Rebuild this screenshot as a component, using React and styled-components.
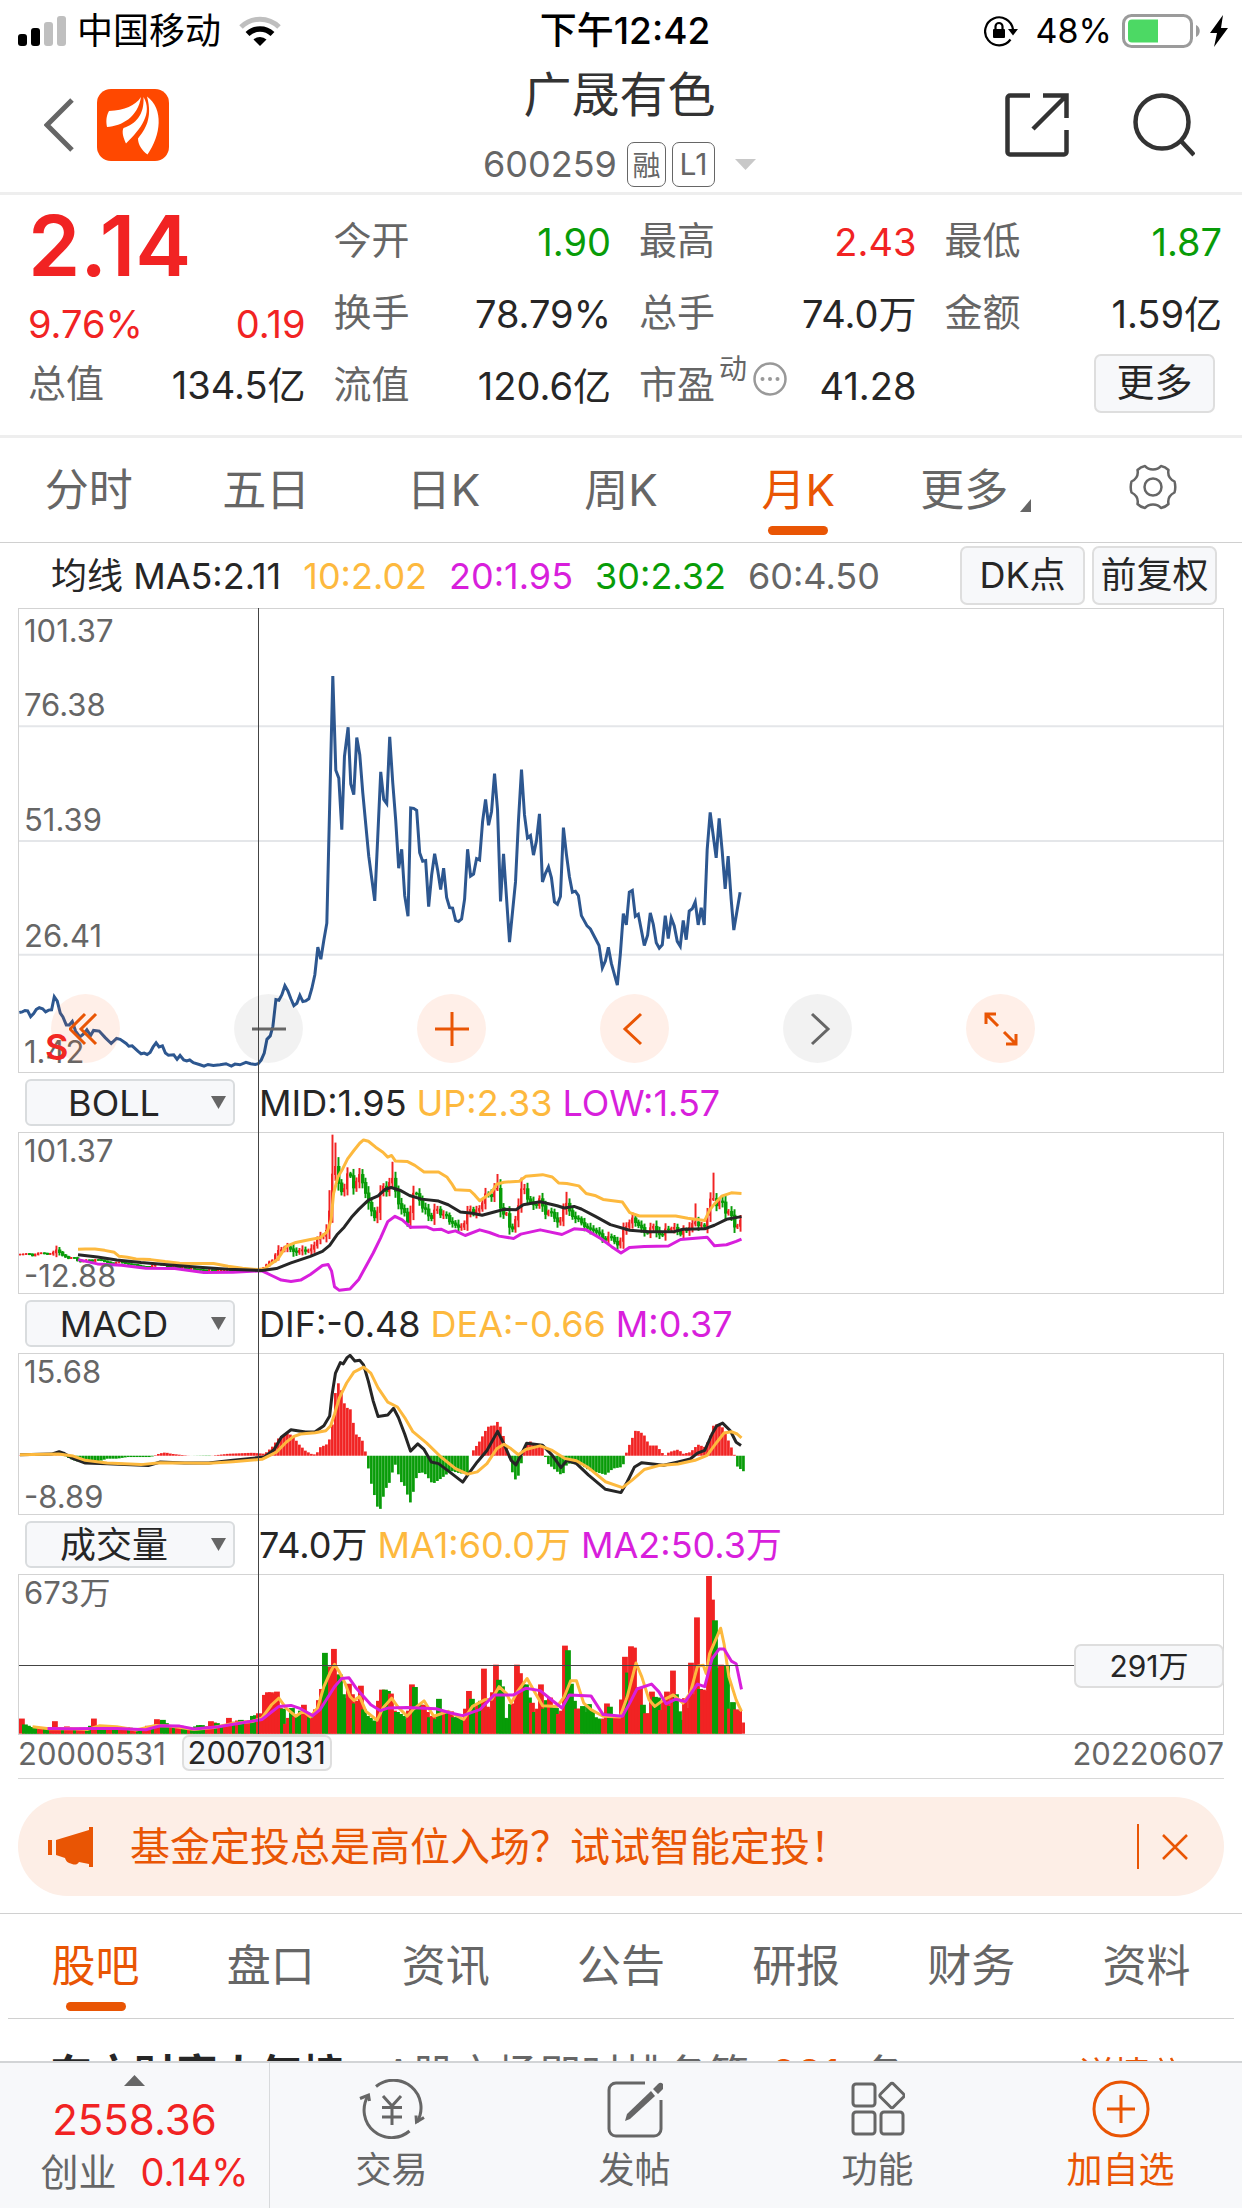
import React, { useState } from 'react';
import styled, { createGlobalStyle } from 'styled-components';

const ORANGE = '#e95504';
const RED = '#f12323';
const GREEN = '#089c08';
const YELLOW = '#fdb93e';
const PURPLE = '#d81fdc';
const DARK = '#262626';
const GREY = '#666666';

const GlobalStyle = createGlobalStyle`
  * {
    box-sizing: border-box;
  }

  body {
    margin: 0;
    background: #ffffff;
    color: ${DARK};
    font-family: Inter, "Noto Sans CJK SC", sans-serif;
    font-weight: 400;
  }

  button, select {
    margin: 0;
    padding: 0;
    border: none;
    background: none;
    color: inherit;
    font: inherit;
    cursor: pointer;
  }

  a {
    color: inherit;
    text-decoration: none;
  }

  svg {
    display: block;
  }
`;

const Page = styled.div`
  display: flex;
  flex-direction: column;
  height: 100vh;
  overflow: hidden;
`;

const Content = styled.main`
  flex: 1;
  min-height: 0;
  overflow: hidden;
`;

/* status bar */

const StatusBar = styled.div`
  display: grid;
  grid-template-columns: 1fr auto 1fr;
  align-items: center;
  height: 62px;
  padding: 0 14px 0 18px;
  color: #000000;
  font-size: 34px;
  line-height: 48px;
`;

const StatusSide = styled.div`
  display: flex;
  align-items: center;
  gap: 10px;
  justify-content: ${({ $end }) => ($end ? 'flex-end' : 'flex-start')};
`;

const Carrier = styled.span`
  margin-right: 8px;
  font-size: 36px;
`;

const Clock = styled.span`
  padding-left: 4px;
  font-size: 37px;
  font-weight: 500;
`;

const Percent = styled.span`
  margin-left: 8px;
`;

/* header */

const Header = styled.header`
  display: grid;
  grid-template-columns: 1fr auto 1fr;
  align-items: center;
  height: 133px;
  padding: 0 47px 0 44px;
  border-bottom: 3px solid #eeeeee;
`;

const HeaderSide = styled.div`
  display: flex;
  align-items: center;
  gap: ${({ $end }) => ($end ? '64px' : '22px')};
  justify-content: ${({ $end }) => ($end ? 'flex-end' : 'flex-start')};
  padding-bottom: 4px;
`;

const TitleBlock = styled.div`
  display: flex;
  flex-direction: column;
  align-items: center;
`;

const StockName = styled.h1`
  margin: 0;
  color: #333333;
  font-size: 48px;
  font-weight: 400;
  line-height: 66px;
`;

const StockCode = styled.button`
  display: flex;
  align-items: center;
  gap: 6px;
  height: 64px;
  padding-top: 8px;
  color: ${GREY};
  font-size: 36px;
`;

const Digits = styled.span`
  margin-right: 4px;
`;

const Tag = styled.span`
  display: flex;
  align-items: center;
  justify-content: center;
  width: ${({ $width }) => $width}px;
  height: 45px;
  border: 1px solid ${GREY};
  border-radius: 7px;
  font-size: ${({ $size }) => $size || 28}px;
`;

const TagArrow = styled.svg`
  margin-left: 14px;
`;

/* quote */

const Quote = styled.section`
  display: grid;
  grid-template-columns: repeat(4, 1fr);
  column-gap: 28px;
  padding: 11px 20px 13px 28px;
  border-bottom: 3px solid #eeeeee;
  font-size: 38px;
  line-height: 46px;
`;

const QuoteRow = styled.div`
  display: flex;
  align-items: center;
  justify-content: space-between;
  height: ${({ $height }) => $height || 72}px;
  color: ${({ $color }) => $color || DARK};
  white-space: nowrap;
`;

const Price = styled.div`
  height: 80px;
  color: ${RED};
  font-size: 84px;
  font-weight: 600;
  line-height: 80px;
`;

const QuoteLabel = styled.span`
  display: flex;
  align-items: center;
  padding-bottom: 4px;
  color: ${GREY};
`;

const Sup = styled.span`
  align-self: flex-start;
  margin: 0 6px 0 4px;
  font-size: 28px;
  line-height: 16px;
`;

const Info = styled.span`
  padding-bottom: 10px;
`;

const QuoteValue = styled.span`
  color: ${({ $color }) => $color || 'inherit'};
`;

const BoxButton = styled.button`
  display: flex;
  align-items: center;
  justify-content: center;
  width: ${({ $width }) => $width}px;
  height: 59px;
  padding-bottom: 2px;
  border: 2px solid #dedede;
  border-radius: 7px;
  background: #f7f8fa;
  color: ${DARK};
  font-size: ${({ $size }) => $size || 36}px;
  white-space: nowrap;
`;

const MoreButton = styled(BoxButton)`
  margin: 0 7px 6px auto;
`;

/* tabs */

const Tabs = styled.nav`
  display: flex;
  height: 105px;
  margin: 0 ${({ $inset }) => $inset || 0}px;
  border-bottom: 1px solid #d0d0d0;
`;

const Tab = styled.button`
  position: relative;
  flex: 1;
  display: flex;
  align-items: center;
  justify-content: center;
  gap: 12px;
  padding-bottom: 6px;
  color: ${({ $active }) => ($active ? ORANGE : GREY)};
  font-size: 44px;

  &::after {
    content: '';
    position: absolute;
    bottom: 7px;
    left: 50%;
    width: 60px;
    height: 9px;
    margin-left: -30px;
    border-radius: 5px;
    background: ${({ $active }) => ($active ? ORANGE : 'transparent')};
  }
`;

const Corner = styled.svg`
  align-self: flex-end;
  margin-bottom: 24px;
`;

/* charts */

const MaRow = styled.div`
  display: flex;
  align-items: center;
  gap: 22px;
  height: 65px;
  padding: 0 25px 0 51px;
  font-size: 36px;
  line-height: 44px;
  white-space: nowrap;
`;

const MaButtons = styled.div`
  display: flex;
  gap: 7px;
  margin-left: auto;
`;

const Value = styled.span`
  color: ${({ $color }) => $color};
`;

const ChartArea = styled.section`
  position: relative;
  margin: 0 18px;
  border-bottom: 1px solid #d8d8d8;
`;

const Frame = styled.div`
  position: relative;
  height: ${({ $height }) => $height}px;
  border: 1px solid #d3d3d3;
`;

const Plot = styled.svg`
  width: 100%;
  height: 100%;

  path, line {
    vector-effect: non-scaling-stroke;
  }
`;

const AxisLabel = styled.span`
  position: absolute;
  top: ${({ $top }) => $top}px;
  left: 5px;
  color: ${GREY};
  font-size: 31px;
  line-height: 36px;
`;

const SellMark = styled.span`
  position: absolute;
  left: 26px;
  bottom: 3px;
  color: ${RED};
  font-size: 36px;
  font-weight: 600;
  line-height: 44px;
`;

const ChartControls = styled.div`
  position: absolute;
  left: 32px;
  bottom: 9px;
  display: flex;
  gap: 114px;
`;

const RoundButton = styled.button`
  display: flex;
  align-items: center;
  justify-content: center;
  width: 69px;
  height: 69px;
  border-radius: 50%;
  background: ${({ $grey }) => ($grey ? 'rgba(0, 0, 0, 0.05)' : 'rgba(255, 100, 30, 0.1)')};
  color: ${({ $grey }) => ($grey ? GREY : ORANGE)};
`;

const IndicatorRow = styled.div`
  display: flex;
  align-items: center;
  gap: 10px;
  height: 59px;
  padding-left: 7px;
  font-size: 36px;
  line-height: 44px;
  white-space: nowrap;
`;

const SelectBox = styled.div`
  position: relative;
  width: 210px;
  margin-right: 14px;
`;

const Select = styled.select`
  appearance: none;
  width: 100%;
  height: 47px;
  padding: 0 32px 0 0;
  border: 2px solid #d9dcde;
  border-radius: 6px;
  background: #f7f8fa;
  text-align: center;
  text-align-last: center;
`;

const SelectArrow = styled.svg`
  position: absolute;
  top: 17px;
  right: 9px;
  pointer-events: none;
`;

const CrossVertical = styled.div`
  position: absolute;
  top: 0;
  bottom: 44px;
  left: 240px;
  width: 1px;
  background: #444444;
`;

const CrossHorizontal = styled.div`
  position: absolute;
  top: 90px;
  left: 0;
  right: 0;
  height: 1px;
  background: #444444;
`;

const CrossValue = styled.span`
  position: absolute;
  top: 69px;
  right: -1px;
  width: 150px;
  height: 44px;
  border: 2px solid #dedede;
  border-radius: 7px;
  background: #f7f8fa;
  font-size: 30px;
  line-height: 40px;
  text-align: center;
`;

const DateRow = styled.div`
  display: flex;
  align-items: flex-start;
  height: 43px;
  color: ${GREY};
  font-size: 31px;
  line-height: 38px;
`;

const CursorDate = styled.span`
  width: 150px;
  height: 36px;
  margin: 0 auto 0 16px;
  border: 2px solid #dedede;
  border-radius: 7px;
  background: #f7f8fa;
  color: ${DARK};
  line-height: 32px;
  text-align: center;
`;

/* banner and feed */

const Banner = styled.aside`
  display: flex;
  align-items: center;
  height: 99px;
  margin: 18px 18px 17px;
  padding: 0 36px 0 30px;
  border-radius: 50px;
  background: #fdeee6;
  color: ${ORANGE};
  font-size: 40px;
`;

const BannerLink = styled.a`
  flex: 1;
  margin-left: 36px;
  padding-bottom: 6px;
  white-space: nowrap;
`;

const BannerClose = styled.button`
  height: 45px;
  padding-left: 23px;
  border-left: 2px solid ${ORANGE};
`;

const Feed = styled.section`
  border-top: 1px solid #d0d0d0;
`;

const RankRow = styled.a`
  display: flex;
  align-items: center;
  height: 60px;
  margin-top: 26px;
  padding: 0 60px 0 50px;
  color: ${GREY};
  font-size: 42px;
  line-height: 60px;
  white-space: nowrap;
`;

const RankTitle = styled.strong`
  margin-right: 40px;
  color: ${DARK};
  font-weight: 700;
`;

const RankNumber = styled.span`
  margin: 0 22px;
  color: ${ORANGE};
`;

const RankMore = styled.span`
  display: flex;
  align-items: center;
  gap: 8px;
  margin-left: auto;
  color: ${ORANGE};
  font-size: 36px;
`;

/* footer */

const Footer = styled.footer`
  display: flex;
  flex: none;
  height: 147px;
  border-top: 2px solid #d2d4d6;
  background: #f7f8fa;
  color: ${GREY};
`;

const IndexCell = styled.button`
  display: flex;
  flex-direction: column;
  align-items: center;
  width: 270px;
  padding-top: 12px;
  border-right: 1px solid #d8dadc;
`;

const IndexValue = styled.span`
  margin-top: 8px;
  color: ${RED};
  font-size: 42px;
  line-height: 52px;
`;

const IndexLine = styled.span`
  display: flex;
  align-items: center;
  gap: 24px;
  padding-left: 20px;
  font-size: 38px;
  line-height: 52px;
`;

const IndexChange = styled.span`
  color: ${RED};
`;

const FooterItem = styled.button`
  flex: 1;
  display: flex;
  flex-direction: column;
  align-items: center;
  padding-top: 16px;
  color: ${({ $active }) => ($active ? ORANGE : 'inherit')};
  font-size: 36px;
  line-height: 62px;
`;

/* chart data, in the plot's own units */

const CLOSE = [
  57,1200, 66,1198, 74,1194, 82,1195, 91,1212, 100,1203, 108,1191, 117,1186, 127,1189, 136,1198, 145,1193, 154,1192,
  162,1154, 171,1167, 180,1202, 188,1213, 198,1236, 207,1236, 216,1226, 226,1254, 239,1271, 250,1262, 260,1250,
  271,1267, 280,1252, 297,1254, 315,1273, 333,1290, 349,1275, 360,1278, 378,1290, 386,1298, 396,1297, 414,1313,
  423,1320, 432,1318, 441,1322, 450,1316, 459,1300, 468,1288, 477,1300, 487,1297, 496,1318, 505,1324, 521,1323,
  531,1336, 540,1325, 551,1338, 560,1341, 569,1338, 580,1346, 600,1352, 612,1356, 624,1351, 640,1354, 660,1352,
  678,1349, 694,1356, 705,1350, 720,1352, 738,1345, 752,1349, 766,1351, 775,1349, 784,1338, 793,1318, 801,1278,
  811,1268, 819,1240, 828,1162, 837,1164, 846,1148, 855,1122, 864,1137, 873,1160, 882,1180, 891,1173, 900,1150,
  909,1168, 918,1166, 927,1160, 936,1130, 945,1090, 954,1010, 963,1045, 972,990, 981,940, 987,700, 999,221,
  1008,495, 1017,518, 1026,668, 1034,455, 1045,370, 1053,535, 1062,566, 1071,400, 1080,450, 1089,560, 1107,745,
  1116,810, 1125,875, 1134,690, 1143,500, 1152,580, 1161,592, 1170,398, 1179,530, 1188,640, 1197,780, 1206,725,
  1215,860, 1225,920, 1233,605, 1242,606, 1251,612, 1260,735, 1269,760, 1278,758, 1287,892, 1296,800, 1305,738,
  1314,785, 1323,842, 1332,780, 1341,865, 1350,895, 1359,896, 1368,932, 1377,935, 1386,928, 1395,870, 1404,725,
  1413,803, 1422,797, 1431,752, 1440,756, 1449,645, 1458,580, 1467,655, 1476,615, 1485,505, 1494,610, 1503,877,
  1512,738, 1530,995, 1548,820, 1557,640, 1566,493, 1575,625, 1584,692, 1593,685, 1602,742, 1611,700, 1620,622,
  1629,820, 1638,795, 1647,776, 1656,808, 1665,878, 1674,885, 1683,862, 1692,662, 1701,740, 1710,805, 1719,850,
  1728,847, 1737,860, 1746,918, 1763,948, 1773,957, 1799,1005, 1809,1070, 1818,1050, 1827,1010, 1836,1057,
  1854,1120, 1863,1030, 1872,912, 1881,945, 1890,850, 1899,845, 1908,920, 1917,914, 1935,1005, 1945,975, 1953,910,
  1962,943, 1971,997, 1980,1013, 1989,1003, 1998,918, 2007,985, 2016,925, 2025,948, 2034,993, 2043,1007, 2052,932,
  2061,988, 2070,905, 2079,898, 2088,878, 2097,945, 2106,895, 2115,945, 2124,725, 2133,618, 2151,750, 2160,635,
  2169,730, 2178,840, 2187,745, 2196,870, 2204,960, 2223,850,
];

const BOLL_UP = [
  160,509, 175,508, 195,508, 215,512, 235,518, 245,530, 262,533, 280,538, 310,540, 340,546, 370,551, 400,552,
  440,552, 470,560, 500,566, 530,570, 545,568, 560,552, 572,540, 590,500, 610,488, 640,479, 660,474, 675,455,
  683,420, 688,340, 697,290, 707,265, 717,235, 730,210, 742,188, 750,178, 760,182, 775,200, 790,215, 800,230,
  808,225, 816,242, 840,243, 856,255, 875,275, 905,275, 922,290, 932,310, 940,329, 970,331, 980,345, 990,362,
  1000,352, 1015,335, 1025,312, 1040,306, 1072,303, 1085,288, 1120,283, 1140,290, 1153,308, 1170,310, 1195,317,
  1210,340, 1230,347, 1245,358, 1285,366, 1300,398, 1320,408, 1395,408, 1420,415, 1455,422, 1465,390, 1475,372,
  1490,348, 1510,338, 1531,340,
];

const BOLL_MID = [
  160,525, 200,532, 240,541, 290,549, 350,556, 410,563, 470,569, 540,573, 570,567, 600,550, 640,530, 665,515,
  680,497, 695,465, 710,442, 725,412, 740,388, 760,360, 780,347, 795,327, 807,322, 825,330, 845,346, 870,357,
  905,363, 925,374, 950,396, 975,400, 995,406, 1020,396, 1040,388, 1065,389, 1080,374, 1115,365, 1150,377,
  1165,384, 1185,379, 1200,387, 1230,410, 1260,434, 1300,451, 1340,456, 1390,456, 1410,448, 1455,447, 1475,436,
  1500,418, 1531,410,
];

const BOLL_LOW = [
  160,540, 200,553, 250,557, 300,566, 360,567, 420,579, 480,578, 540,574, 560,588, 580,602, 600,606, 620,602,
  640,585, 665,558, 677,555, 684,575, 690,622, 700,633, 722,629, 740,600, 755,560, 770,520, 785,475, 800,425,
  815,409, 830,420, 847,442, 880,441, 895,450, 910,448, 925,458, 940,453, 960,467, 990,450, 1010,458, 1030,469,
  1060,476, 1075,463, 1115,450, 1160,464, 1185,447, 1210,450, 1240,476, 1262,500, 1282,520, 1300,503, 1330,500,
  1380,499, 1405,479, 1460,472, 1475,498, 1500,495, 1520,485, 1531,478,
];

const DIF = [
  40,463, 105,461, 121,454, 130,458, 150,475, 175,488, 220,490, 305,496, 330,485, 380,488, 430,488, 480,480,
  545,470, 565,448, 580,410, 600,387, 630,394, 650,393, 668,375, 680,345, 685,280, 692,215, 702,183, 708,187,
  716,168, 722,161, 732,178, 742,176, 750,190, 760,240, 770,300, 780,347, 800,342, 812,322, 822,350, 835,400,
  847,452, 862,430, 875,447, 890,485, 905,490, 925,512, 955,546, 965,525, 985,485, 1005,450, 1027,392, 1040,430,
  1055,480, 1065,494, 1075,465, 1087,428, 1120,434, 1140,465, 1158,502, 1170,480, 1190,490, 1215,525, 1250,568,
  1282,578, 1295,545, 1310,500, 1325,487, 1370,495, 1400,485, 1425,476, 1440,458, 1455,450, 1470,400, 1480,375,
  1492,367, 1508,390, 1520,425, 1530,435,
];

const DEA = [
  40,463, 120,461, 150,467, 175,480, 220,488, 290,493, 330,487, 430,489, 480,484, 540,477, 570,455, 590,425,
  605,408, 620,400, 650,396, 672,390, 682,375, 690,340, 700,290, 715,245, 730,212, 750,197, 765,215, 780,260,
  800,303, 820,318, 835,350, 852,393, 880,427, 910,470, 940,505, 965,522, 985,515, 1005,490, 1025,445, 1040,431,
  1055,445, 1070,463, 1085,447, 1115,436, 1140,450, 1165,474, 1190,481, 1215,503, 1250,545, 1285,563, 1305,540,
  1330,508, 1360,496, 1400,491, 1435,480, 1460,465, 1480,425, 1495,397, 1510,393, 1522,400, 1531,412,
];

const MACD = [
  40,465, 130,465, 142,475, 155,482, 175,489, 200,484, 220,475, 240,475, 262,470, 310,470, 318,465, 328,459,
  340,456, 352,460, 375,464, 390,466, 430,467, 440,465, 470,460, 520,457, 545,460, 560,440, 575,410, 592,398,
  603,405, 615,430, 630,452, 645,463, 652,460, 660,440, 675,430, 683,400, 688,320, 693,246, 701,246, 706,290,
  712,318, 722,325, 728,365, 735,405, 745,412, 751,440, 755,466, 760,512, 768,570, 775,600, 780,637, 785,625,
  793,572, 804,545, 810,510, 816,490, 824,540, 835,560, 841,590, 848,615, 856,540, 866,515, 876,520, 892,552,
  910,535, 930,512, 950,520, 966,520, 970,466, 976,450, 990,420, 1005,380, 1010,375, 1022,374, 1027,360,
  1034,385, 1045,440, 1050,466, 1055,510, 1065,545, 1073,510, 1078,466, 1084,440, 1090,418, 1100,430, 1120,435,
  1124,466, 1130,490, 1150,515, 1160,527, 1170,490, 1195,490, 1215,510, 1250,524, 1265,505, 1285,500, 1290,466,
  1298,435, 1312,387, 1328,400, 1340,435, 1355,435, 1368,460, 1375,466, 1380,455, 1400,447, 1410,460, 1425,455,
  1440,432, 1455,440, 1465,410, 1472,375, 1480,370, 1490,378, 1500,400, 1506,437, 1513,445, 1516,466, 1522,500,
  1536,515,
];

// negative: the price fell that month
const VOLUME = [
  46, -28, -24, -20, -20, -18, 16, 20, -14, -14, 18, 38, 20, 20, -20, 22, 16, 14, -12, 12, 18, 16, -14, -24,
  46, 26, -26, -24, -24, 22, 18, -16, -18, 14, 16, 20, -18, 16, 14, -14, -12, 20, 24, 20, -22, 44, 40, -42,
  -32, -24, 20, -20, 22, 24, -20, -20, 16, -16, -22, -26, -26, -22, 22, 38, 34, -32, 22, -22, 26, 48, 36, -36,
  40, -42, -38, 40, 40, -54, -56, 62, 60, 118, 126, 126, 122, 128, 78, -76, 30, 48, -78, 52, -52, -70, 88, 60,
  -50, 48, 74, 102, 136, -246, -204, 204, 258, 180, -180, -120, -108, 152, 120, -92, 100, 146, -74, -54, -48,
  -38, -40, 100, 134, -134, -130, 122, 70, -66, -60, -54, -44, 70, 150, -142, -90, -88, 88, 66, -50, 54, -44,
  -106, -70, 60, -66, 68, -50, -50, -44, -42, 76, 130, -106, -76, 90, -100, 198, 82, 76, 126, 210, -164, -144,
  -48, -46, -90, 92, 210, 184, 150, -150, -110, 94, -66, 76, 150, -76, -102, 110, -80, -78, 60, 70, 268, -254,
  -152, -100, 76, 76, -84, -66, -90, -70, -50, -46, -42, 46, 92, -82, -50, 50, 52, 104, 234, -186, 266, 262,
  140, 142, -88, 62, 62, 128, -112, -110, 72, 100, 128, -84, 192, -120, -68, -42, 108, 78, 216, 120, 354, -136,
  134, 130, 480, 408, -345, -200, 210, 206, -206, 76, -96, 74, 70, 70, 34,
];

const VOL_MA1 = [
  66,592, 100,598, 140,597, 180,600, 205,589, 240,592, 280,602, 320,588, 350,590, 400,600, 440,594, 480,582,
  520,576, 540,565, 560,525, 575,505, 590,535, 610,560, 625,545, 640,562, 655,535, 668,470, 680,430, 690,402,
  700,425, 712,460, 722,500, 730,512, 742,500, 755,545, 778,572, 790,535, 808,505, 820,530, 840,560, 852,540,
  875,513, 895,560, 925,545, 957,570, 975,530, 1000,510, 1015,508, 1030,470, 1045,490, 1055,520, 1068,485,
  1088,445, 1105,490, 1120,528, 1150,530, 1165,500, 1178,452, 1190,452, 1205,520, 1220,540, 1245,560, 1280,562,
  1295,500, 1313,398, 1325,440, 1340,510, 1352,530, 1370,510, 1390,495, 1410,520, 1425,490, 1440,408, 1452,405,
  1458,430, 1465,370, 1488,292, 1495,340, 1505,440, 1520,510, 1531,545,
];

const VOL_MA2 = [
  97,597, 150,598, 190,597, 240,597, 300,601, 330,589, 370,590, 400,599, 450,592, 500,580, 540,570, 575,530,
  600,527, 620,537, 645,558, 660,540, 690,470, 705,445, 720,443, 735,475, 765,525, 785,543, 800,535, 840,533,
  900,537, 930,550, 955,558, 990,540, 1020,495, 1060,495, 1085,475, 1115,482, 1140,512, 1160,535, 1175,495,
  1220,498, 1245,555, 1285,560, 1300,520, 1315,477, 1345,462, 1360,485, 1375,522, 1395,508, 1415,515, 1440,462,
  1455,470, 1470,385, 1485,355, 1495,355, 1510,392, 1520,400, 1531,478,
];

const STEP = 6.2;
const MONTHS = 241;

const toPath = (data) => {
  let d = '';
  for (let i = 0; i < data.length; i += 2) {
    d += `${i ? 'L' : 'M'}${data[i]} ${data[i + 1]}`;
  }
  return d;
};

const valueAt = (data, x) => {
  for (let i = 2; i < data.length; i += 2) {
    if (x <= data[i]) {
      const t = (x - data[i - 2]) / (data[i] - data[i - 2]);
      return data[i - 1] + (data[i + 1] - data[i - 1]) * Math.max(0, t);
    }
  }
  return data[data.length - 1];
};

const HIGHS = { 103: 330, 104: 162, 105: 186, 106: 230, 124: 244, 159: 281, 167: 292, 182: 335, 225: 370, 231: 277 };

const candles = Array.from({ length: MONTHS }, (_, i) => {
  const closeAt = (n) => 160 + (valueAt(CLOSE, 57 + n * 9.01) - 26) * 0.3104;
  const close = closeAt(i);
  const open = closeAt(Math.max(0, i - 1));
  const spread = Math.abs(close - open);
  const wick = 2 + spread * 0.25 + (close < 520 ? 3 + ((i * 7) % 11) : 0);
  return {
    x: 41 + i * STEP,
    up: close <= open,
    top: Math.min(open, close) - 2,
    height: Math.max(5, spread + 4),
    high: HIGHS[i] || Math.min(open, close) - wick,
    low: Math.max(open, close) + wick,
  };
});

const Line = ({ data, color, width = 3 }) => (
  <path d={toPath(data)} fill="none" stroke={color} strokeWidth={width} strokeLinejoin="round" />
);

const PriceChart = () => (
  <Plot viewBox="56 26 3618 1347" preserveAspectRatio="none" aria-hidden="true">
    {[367, 701, 1032].map((y) => (
      <line key={y} x1="56" x2="3674" y1={y} y2={y} stroke="#e4e6e9" strokeWidth="2" />
    ))}
    <path d={toPath(CLOSE)} fill="none" stroke="#2d5790" strokeWidth="3" />
  </Plot>
);

const BollChart = () => (
  <Plot viewBox="38 157 2488 484" preserveAspectRatio="none" aria-hidden="true">
    {candles.map(({ x, up, top, height, high, low }) => (
      <g key={x} fill={up ? RED : GREEN}>
        <rect x={x - 2} y={high} width="4" height={low - high} />
        <rect x={x - 3} y={top} width={up ? 4 : 7} height={height} />
      </g>
    ))}
    <Line data={BOLL_UP} color={YELLOW} />
    <Line data={BOLL_LOW} color={PURPLE} />
    <Line data={BOLL_MID} color={DARK} />
  </Plot>
);

const MacdChart = () => (
  <Plot viewBox="38 157 2488 486" preserveAspectRatio="none" aria-hidden="true">
    {Array.from({ length: MONTHS + 1 }, (_, i) => {
      const x = 40 + i * STEP;
      const y = valueAt(MACD, x);
      return (
        <rect
          key={i}
          x={x - 2}
          y={Math.min(y, 466)}
          width="5.6"
          height={Math.abs(y - 466)}
          fill={y < 466 ? RED : GREEN}
        />
      );
    })}
    <Line data={DIF} color={DARK} />
    <Line data={DEA} color={YELLOW} />
  </Plot>
);

const VolumeChart = () => (
  <Plot viewBox="38 130 2488 484" preserveAspectRatio="none" aria-hidden="true">
    {VOLUME.map((v, i) => (
      <rect
        key={i}
        x={38 + i * STEP}
        y={613 - Math.abs(v)}
        width={i < MONTHS - 1 ? 12 : 6}
        height={Math.abs(v)}
        fill={v < 0 ? GREEN : RED}
      />
    ))}
    <Line data={VOL_MA1} color={YELLOW} />
    <Line data={VOL_MA2} color={PURPLE} />
  </Plot>
);

/* icons */

const SignalIcon = () => (
  <svg width="49" height="31" viewBox="0 0 49 31">
    <rect x="0" y="18" width="9" height="12" rx="3" />
    <rect x="13" y="12" width="9" height="18" rx="3" />
    <rect x="26" y="6" width="9" height="24" rx="3" fill="#bfbfbf" />
    <rect x="39" y="0" width="9" height="30" rx="3" fill="#bfbfbf" />
  </svg>
);

const WifiIcon = () => (
  <svg width="42" height="30" viewBox="0 0 42 30" fill="none">
    <path d="M2 11a27 27 0 0 1 38 0" stroke="#bfbfbf" strokeWidth="5" />
    <path d="M8.500 18a18 18 0 0 1 25 0" stroke="#000" strokeWidth="5.500" />
    <path d="M21 30l-6.500-6.500a9.500 9.500 0 0 1 13 0z" fill="#000" />
  </svg>
);

const RotationLockIcon = () => (
  <svg width="34" height="32" viewBox="0 0 34 32" fill="none" stroke="#000" strokeWidth="2.200">
    <path d="M26.500 24.500a14 14 0 1 1 2.500-10" />
    <path d="M24 14h10l-5 6.500z" fill="#000" stroke="none" />
    <rect x="9" y="14" width="12" height="9" rx="1" fill="#000" stroke="none" />
    <path d="M11.500 15v-3.500a3.500 3.500 0 0 1 7 0V15" />
  </svg>
);

const BatteryIcon = () => (
  <svg width="78" height="34" viewBox="0 0 78 34">
    <rect x="1.500" y="1.500" width="68" height="31" rx="8" fill="none" stroke="#9b9b9b" strokeWidth="3" />
    <path d="M10 5.500h26v23H10a4 4 0 0 1-4-4v-15a4 4 0 0 1 4-4z" fill="#4cd964" />
    <path d="M74 11c5 2 5 10 0 12z" fill="#9b9b9b" />
  </svg>
);

const BoltIcon = () => (
  <svg width="18" height="32" viewBox="0 0 18 32">
    <path d="M13 0L0 18h7L4 32 18 13h-7z" />
  </svg>
);

const BackIcon = () => (
  <svg width="31" height="54" viewBox="0 0 31 54" fill="none" stroke="#666" strokeWidth="5">
    <path d="M28 2L3 27l25 25" />
  </svg>
);

const BrandLogo = () => (
  <svg width="72" height="72" viewBox="0 0 72 72">
    <rect width="72" height="72" rx="14" fill="#ff4800" />
    <g fill="#fff">
      <path d="M44 8C38 17 28 21 12 22c-3 5-3 11-2 16 15-1 31-10 34-30z" />
      <path d="M46.500 8c1 18-8 27-20 31-2 4 0 10 2.500 15.500C44 40 56 24 46.500 8z" />
      <path d="M50 7.500c6 22-2 33-9 42 0 6 4 12 9.500 16C64 46 67 20 50 7.500z" />
    </g>
  </svg>
);

const ShareIcon = () => (
  <svg width="64" height="64" viewBox="0 0 64 64" fill="none" stroke="#333" strokeWidth="4.500">
    <path d="M25 2.500H5a2.500 2.500 0 0 0-2.500 2.500v54A2.500 2.500 0 0 0 5 61.500h54a2.500 2.500 0 0 0 2.500-2.500V37M38 2.500h23.500V25M60 4L28 36" />
  </svg>
);

const SearchIcon = () => (
  <svg width="62" height="64" viewBox="0 0 62 64" fill="none" stroke="#333" strokeWidth="4.500">
    <circle cx="29" cy="29" r="26.500" />
    <path d="M48 48l13 14" />
  </svg>
);

const MoreDotsIcon = () => (
  <svg width="34" height="34" viewBox="0 0 34 34" fill="#999">
    <circle cx="17" cy="17" r="15.500" fill="none" stroke="#999" strokeWidth="2.500" />
    <circle cx="9.500" cy="17" r="2" />
    <circle cx="17" cy="17" r="2" />
    <circle cx="24.500" cy="17" r="2" />
  </svg>
);

const GearIcon = () => (
  <svg width="48" height="46" viewBox="0 0 48 46" fill="none" stroke="#666" strokeWidth="2.500">
    <path
      d="M16 2c2 2.500 5 3.500 8 3.500s6-1 8-3.500c3 .5 5.500 2 7.500 4-1 5 1 9 6 11.500 1 3.500 1 7.500 0 11-5 2.500-7 6.500-6 11.500-2 2-4.500 3.500-7.500 4-2-2.500-5-3.500-8-3.500s-6 1-8 3.500c-3-.5-5.500-2-7.500-4 1-5-1-9-6-11.500-1-3.500-1-7.500 0-11 5-2.500 7-6.500 6-11.500 2-2 4.500-3.500 7.500-4z"
      strokeLinejoin="round"
    />
    <circle cx="24" cy="23" r="8.500" />
  </svg>
);

const HornIcon = () => (
  <svg width="46" height="40" viewBox="0 0 46 40" fill={ORANGE}>
    <rect x="0" y="13" width="4" height="15" />
    <path d="M8 13L41 3V0h4v40h-4v-3l-10-2c-2 3-4 3-7 2s-6-2-7-6l-9-3z" />
  </svg>
);

const CloseIcon = () => (
  <svg width="26" height="26" viewBox="0 0 26 26" fill="none" stroke={ORANGE} strokeWidth="2.500">
    <path d="M1 1l24 24M25 1L1 25" />
  </svg>
);

const ForwardIcon = () => (
  <svg width="24" height="36" viewBox="0 0 24 36" fill="none" stroke={ORANGE} strokeWidth="2.500">
    <path d="M2 1l9 17L2 35M13 1l9 17-9 17" />
  </svg>
);

const TradeIcon = () => (
  <svg width="66" height="60" viewBox="0 0 66 60" fill="none" stroke="currentColor" strokeWidth="3">
    <path d="M17 7.500A27.500 27.500 0 0 1 58 43M50.500 52A27.500 27.500 0 0 1 9 17" />
    <path d="M1 19.500l8.500-3.500 1 6M65 38.500L57.500 43l-.5-6.500" />
    <path d="M24 17l9 10 9-10M33 27v19M23 28.500h20M23 38h20" />
  </svg>
);

const PostIcon = () => (
  <svg width="56" height="60" viewBox="0 0 56 60" fill="none" stroke="currentColor" strokeWidth="3">
    <path d="M38 4H9a7 7 0 0 0-7 7v39a7 7 0 0 0 7 7h38a7 7 0 0 0 7-7V21" />
    <path d="M44 12l4 5-25 23-5 2 2-7z" fill="currentColor" stroke="none" />
    <path d="M46 10l5-5a3.500 3.500 0 0 1 5 5l-5 5z" fill="currentColor" stroke="none" />
  </svg>
);

const ModulesIcon = () => (
  <svg width="54" height="60" viewBox="0 0 54 60" fill="none" stroke="currentColor" strokeWidth="3">
    <rect x="2" y="5" width="22" height="22" rx="3" />
    <rect x="2" y="33" width="22" height="22" rx="3" />
    <rect x="30" y="33" width="22" height="22" rx="3" />
    <path d="M39.500 5a2 2 0 0 1 3 0L52.500 15a2 2 0 0 1 0 3l-10 10a2 2 0 0 1-3 0l-10-10a2 2 0 0 1 0-3z" />
  </svg>
);

const AddIcon = () => (
  <svg width="58" height="60" viewBox="0 0 58 60" fill="none" stroke="currentColor" strokeWidth="3">
    <circle cx="29" cy="30" r="27" />
    <path d="M29 16v28M15 30h28" />
  </svg>
);

const ControlIcon = ({ d }) => (
  <svg width="34" height="34" viewBox="0 0 34 34" fill="none" stroke="currentColor" strokeWidth="3">
    <path d={d} />
  </svg>
);

const controls = [
  { label: '最早', d: 'M16 2L1 17l15 15M27 2L12 17l15 15' },
  { label: '缩小', d: 'M0 17h34', grey: true },
  { label: '放大', d: 'M0 17h34M17 0v34' },
  { label: '前移', d: 'M23 2L7 17l16 15' },
  { label: '后移', d: 'M11 2l16 15-16 15', grey: true },
  { label: '全屏', d: 'M2 12V2h10M2 2l12 12M32 22v10H22M32 32L20 20' },
];

const quoteColumns = [
  [
    { label: '今开', value: '1.90', color: GREEN },
    { label: '换手', value: '78.79%' },
    { label: '流值', value: '120.6亿' },
  ],
  [
    { label: '最高', value: '2.43', color: RED },
    { label: '总手', value: '74.0万' },
    { label: '市盈', value: '41.28', dynamic: true },
  ],
  [
    { label: '最低', value: '1.87', color: GREEN },
    { label: '金额', value: '1.59亿' },
  ],
];

const periods = ['分时', '五日', '日K', '周K', '月K', '更多'];
const sections = ['股吧', '盘口', '资讯', '公告', '研报', '财务', '资料'];

const Indicator = ({ name, values }) => (
  <IndicatorRow>
    <SelectBox>
      <Select aria-label={name} defaultValue={name}>
        <option>{name}</option>
      </Select>
      <SelectArrow width="15" height="13" viewBox="0 0 15 13">
        <path d="M0 0h15L7.500 13z" fill={GREY} />
      </SelectArrow>
    </SelectBox>
    {values.map(([text, color]) => (
      <Value key={text} $color={color}>{text}</Value>
    ))}
  </IndicatorRow>
);

const App = () => {
  const [period, setPeriod] = useState('月K');
  const [section, setSection] = useState('股吧');

  return (
    <Page>
      <GlobalStyle />
      <StatusBar>
        <StatusSide>
          <SignalIcon />
          <Carrier>中国移动</Carrier>
          <WifiIcon />
        </StatusSide>
        <Clock>下午12:42</Clock>
        <StatusSide $end>
          <RotationLockIcon />
          <Percent>48%</Percent>
          <BatteryIcon />
          <BoltIcon />
        </StatusSide>
      </StatusBar>

      <Header>
        <HeaderSide>
          <button aria-label="返回"><BackIcon /></button>
          <BrandLogo />
        </HeaderSide>
        <TitleBlock>
          <StockName>广晟有色</StockName>
          <StockCode>
            <Digits>600259</Digits>
            <Tag $width={39}>融</Tag>
            <Tag $width={43} $size={30}>L1</Tag>
            <TagArrow width="21" height="11" viewBox="0 0 21 11">
              <path d="M0 0h21L10.500 11z" fill="#c8c8c8" />
            </TagArrow>
          </StockCode>
        </TitleBlock>
        <HeaderSide $end>
          <button aria-label="分享"><ShareIcon /></button>
          <button aria-label="搜索"><SearchIcon /></button>
        </HeaderSide>
      </Header>

      <Content>
        <Quote>
          <div>
            <Price>2.14</Price>
            <QuoteRow $height={76} $color={RED}>
              <span>9.76%</span>
              <span>0.19</span>
            </QuoteRow>
            <QuoteRow $height={46}>
              <QuoteLabel>总值</QuoteLabel>
              <QuoteValue>134.5亿</QuoteValue>
            </QuoteRow>
          </div>
          {quoteColumns.map((rows) => (
            <div key={rows[0].label}>
              {rows.map(({ label, value, color, dynamic }) => (
                <QuoteRow key={label}>
                  <QuoteLabel>
                    {label}
                    {dynamic && <Sup>动</Sup>}
                    {dynamic && <Info><MoreDotsIcon /></Info>}
                  </QuoteLabel>
                  <QuoteValue $color={color}>{value}</QuoteValue>
                </QuoteRow>
              ))}
              {rows.length < 3 && (
                <QuoteRow>
                  <MoreButton $width={121} $size={38}>更多</MoreButton>
                </QuoteRow>
              )}
            </div>
          ))}
        </Quote>

        <Tabs>
          {periods.map((name) => (
            <Tab key={name} $active={name === period} onClick={() => setPeriod(name)}>
              {name}
              {name === '更多' && (
                <Corner width="11" height="13" viewBox="0 0 11 13">
                  <path d="M11 0v13H0z" fill={GREY} />
                </Corner>
              )}
            </Tab>
          ))}
          <Tab aria-label="设置"><GearIcon /></Tab>
        </Tabs>

        <MaRow>
          <Value $color={DARK}>均线 MA5:2.11</Value>
          <Value $color={YELLOW}>10:2.02</Value>
          <Value $color={PURPLE}>20:1.95</Value>
          <Value $color={GREEN}>30:2.32</Value>
          <Value $color={GREY}>60:4.50</Value>
          <MaButtons>
            <BoxButton $width={125}>DK点</BoxButton>
            <BoxButton $width={125}>前复权</BoxButton>
          </MaButtons>
        </MaRow>

        <ChartArea>
          <Frame $height={465}>
            <PriceChart />
            <AxisLabel $top={4}>101.37</AxisLabel>
            <AxisLabel $top={78}>76.38</AxisLabel>
            <AxisLabel $top={193}>51.39</AxisLabel>
            <AxisLabel $top={309}>26.41</AxisLabel>
            <AxisLabel $top={425}>1.42</AxisLabel>
            <SellMark>S</SellMark>
            <ChartControls>
              {controls.map(({ label, d, grey }) => (
                <RoundButton key={label} aria-label={label} $grey={grey}>
                  <ControlIcon d={d} />
                </RoundButton>
              ))}
            </ChartControls>
          </Frame>

          <Indicator name="BOLL" values={[['MID:1.95', DARK], ['UP:2.33', YELLOW], ['LOW:1.57', PURPLE]]} />
          <Frame $height={162}>
            <BollChart />
            <AxisLabel $top={0}>101.37</AxisLabel>
            <AxisLabel $top={125}>-12.88</AxisLabel>
          </Frame>

          <Indicator name="MACD" values={[['DIF:-0.48', DARK], ['DEA:-0.66', YELLOW], ['M:0.37', PURPLE]]} />
          <Frame $height={162}>
            <MacdChart />
            <AxisLabel $top={0}>15.68</AxisLabel>
            <AxisLabel $top={125}>-8.89</AxisLabel>
          </Frame>

          <Indicator name="成交量" values={[['74.0万', DARK], ['MA1:60.0万', YELLOW], ['MA2:50.3万', PURPLE]]} />
          <Frame $height={161}>
            <VolumeChart />
            <AxisLabel $top={0}>673万</AxisLabel>
            <CrossHorizontal />
            <CrossValue>291万</CrossValue>
          </Frame>
          <DateRow>
            <span>20000531</span>
            <CursorDate>20070131</CursorDate>
            <span>20220607</span>
          </DateRow>
          <CrossVertical />
        </ChartArea>

        <Banner>
          <HornIcon />
          <BannerLink href="#plan">基金定投总是高位入场？试试智能定投！</BannerLink>
          <BannerClose aria-label="关闭"><CloseIcon /></BannerClose>
        </Banner>

        <Feed>
          <Tabs $inset={8}>
            {sections.map((name) => (
              <Tab key={name} $active={name === section} onClick={() => setSection(name)}>
                {name}
              </Tab>
            ))}
          </Tabs>
          <RankRow href="#rank">
            <RankTitle>东方财富人气榜</RankTitle>
            A股市场即时排名第
            <RankNumber>281</RankNumber>
            名
            <RankMore>详情<ForwardIcon /></RankMore>
          </RankRow>
        </Feed>
      </Content>

      <Footer>
        <IndexCell>
          <svg width="21" height="11" viewBox="0 0 21 11">
            <path d="M10.500 0L21 11H0z" fill={GREY} />
          </svg>
          <IndexValue>2558.36</IndexValue>
          <IndexLine>
            创业
            <IndexChange>0.14%</IndexChange>
          </IndexLine>
        </IndexCell>
        <FooterItem><TradeIcon />交易</FooterItem>
        <FooterItem><PostIcon />发帖</FooterItem>
        <FooterItem><ModulesIcon />功能</FooterItem>
        <FooterItem $active><AddIcon />加自选</FooterItem>
      </Footer>
    </Page>
  );
};

export default App;
